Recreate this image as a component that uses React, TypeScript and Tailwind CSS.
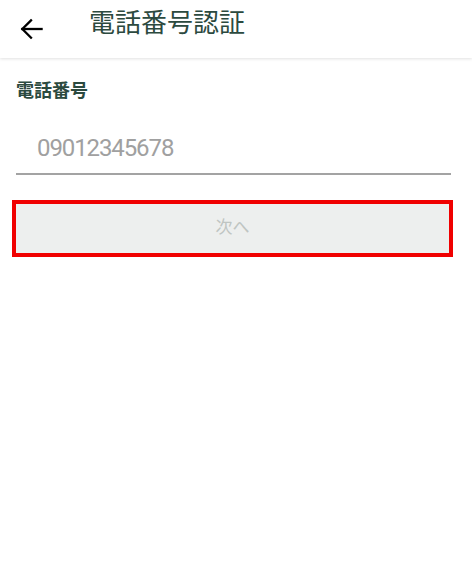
export default function App() {
  return (
    <div className="min-h-[561px] w-[472px] bg-white font-['Roboto','Noto_Sans_CJK_JP',sans-serif]">
      <header className="flex h-[58px] items-center shadow-[0_1px_3px_rgba(0,0,0,0.12)]">
        <button className="ml-[19px] flex h-6 w-6 items-center justify-center text-black">
          <svg width="25" height="24" viewBox="0 0 25 24" fill="none" stroke="currentColor" strokeWidth="2.4" strokeLinecap="square">
            <path d="M3.5 12H23.5" />
            <path d="M12.5 3L3.5 12L12.5 21" />
          </svg>
        </button>
        <h1 className="ml-[46px] -mt-[16px] text-[26px] leading-none text-[#2c4a3f] font-['Noto_Sans_CJK_JP',sans-serif]">
          電話番号認証
        </h1>
      </header>

      <main className="pt-[18px]">
        <div className="pl-4">
          <label className="block text-[18px] font-bold leading-[26px] text-[#2c4a3f] font-['Noto_Sans_CJK_JP',sans-serif]">
            電話番号
          </label>
          <div className="mt-[31px] w-[435px] border-b-2 border-[#a3a3a3] pb-[10px] pl-[21px]">
            <input
              className="w-full bg-transparent text-[24px] leading-[30px] tracking-[-1.1px] text-[#333] outline-none placeholder:text-[#a0a0a0]"
              placeholder="09012345678"
            />
          </div>
        </div>

        <div className="ml-3 mt-[25px] w-[441px]">
          <button className="flex h-[57px] w-full items-center justify-center border-4 border-[#f00000] bg-[#edefee] pb-[6px] text-[17px] leading-none text-[#bfc5c2] font-['Noto_Sans_CJK_JP',sans-serif]">
            次へ
          </button>
        </div>
      </main>
    </div>
  );
}
